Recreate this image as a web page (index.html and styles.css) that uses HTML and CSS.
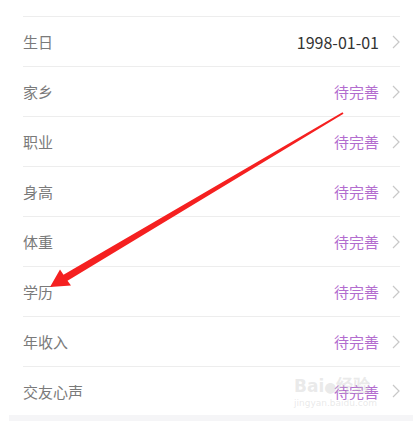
FILE: index.html
```html
<!DOCTYPE html>
<html lang="zh-CN">
  <head>
    <meta charset="UTF-8" />
    <meta name="viewport" content="width=device-width, initial-scale=1.0" />
    <title>个人资料</title>
    <link rel="stylesheet" href="styles.css">
  </head>
  <body>
    <div class="page">
      <ul class="info-list">
        <li class="info-row info-top"></li>
        <li class="info-row">
          <span class="label">生日</span>
          <span class="value date">1998-01-01</span>
          <svg class="chevron" viewBox="0 0 8 14"><path d="M1 1l6 6-6 6" /></svg>
        </li>
        <li class="info-row">
          <span class="label">家乡</span>
          <span class="value todo">待完善</span>
          <svg class="chevron" viewBox="0 0 8 14"><path d="M1 1l6 6-6 6" /></svg>
        </li>
        <li class="info-row">
          <span class="label">职业</span>
          <span class="value todo">待完善</span>
          <svg class="chevron" viewBox="0 0 8 14"><path d="M1 1l6 6-6 6" /></svg>
        </li>
        <li class="info-row">
          <span class="label">身高</span>
          <span class="value todo">待完善</span>
          <svg class="chevron" viewBox="0 0 8 14"><path d="M1 1l6 6-6 6" /></svg>
        </li>
        <li class="info-row">
          <span class="label">体重</span>
          <span class="value todo">待完善</span>
          <svg class="chevron" viewBox="0 0 8 14"><path d="M1 1l6 6-6 6" /></svg>
        </li>
        <li class="info-row">
          <span class="label">学历</span>
          <span class="value todo">待完善</span>
          <svg class="chevron" viewBox="0 0 8 14"><path d="M1 1l6 6-6 6" /></svg>
        </li>
        <li class="info-row">
          <span class="label">年收入</span>
          <span class="value todo">待完善</span>
          <svg class="chevron" viewBox="0 0 8 14"><path d="M1 1l6 6-6 6" /></svg>
        </li>
        <li class="info-row">
          <span class="label">交友心声</span>
          <span class="value todo">待完善</span>
          <svg class="chevron" viewBox="0 0 8 14"><path d="M1 1l6 6-6 6" /></svg>
        </li>
      </ul>
      <div class="footer-band"></div>

      <!-- annotation arrow drawn over the list -->
      <svg class="annotation" viewBox="0 0 413 421">
        <polygon points="50,287 71,285.5 67.5,280.8 343.5,113.7 342.5,112.3 63.5,274.8 60,269.5" />
      </svg>

      <div class="watermark">
        <span class="wm-logo">Bai<span class="wm-paw">●</span>经验</span>
        <span class="wm-url">jingyan.baidu.com</span>
      </div>
    </div>
  </body>
</html>
```

FILE: styles.css
```css
* {
  margin: 0;
  padding: 0;
  box-sizing: border-box;
}

body {
  background-color: #fff;
  font-family: "Noto Sans CJK SC", "Noto Sans", sans-serif;
}

.page {
  position: relative;
  width: 413px;
  height: 421px;
  overflow: hidden;
}

.info-list {
  list-style: none;
  padding: 0 13px 0 23px;
}

.info-row {
  height: 50px;
  display: flex;
  align-items: center;
  border-bottom: 1px solid #ededed;
}

.info-row.info-top {
  height: 17px;
}

.info-row:last-child {
  height: 48px;
  border-bottom: none;
}

.label {
  flex: 1;
  font-size: 15px;
  color: #7a7a7a;
}

.value {
  font-size: 15px;
  color: #333;
  margin-right: 13px;
}

.value.date {
  font-size: 16px;
  color: #333;
}

.value.todo {
  color: #b36ccf;
}

.chevron {
  width: 8px;
  height: 14px;
  fill: none;
  stroke: #c8c8c8;
  stroke-width: 1.2;
}

.footer-band {
  margin-left: 9px;
  height: 8px;
  background-color: #f5f5f7;
}

.annotation {
  position: absolute;
  left: 0;
  top: 0;
  width: 413px;
  height: 421px;
  fill: #f52020;
}

.watermark {
  position: absolute;
  left: 294px;
  top: 376px;
  display: flex;
  flex-direction: column;
  align-items: flex-start;
  color: rgba(200, 200, 200, 0.4);
  pointer-events: none;
}

.wm-logo {
  font-family: "DejaVu Sans", sans-serif;
  font-size: 17px;
  font-weight: bold;
  line-height: 20px;
}

.wm-paw {
  font-size: 14px;
}

.wm-url {
  font-family: "DejaVu Sans", sans-serif;
  font-size: 9px;
  line-height: 12px;
}
```
